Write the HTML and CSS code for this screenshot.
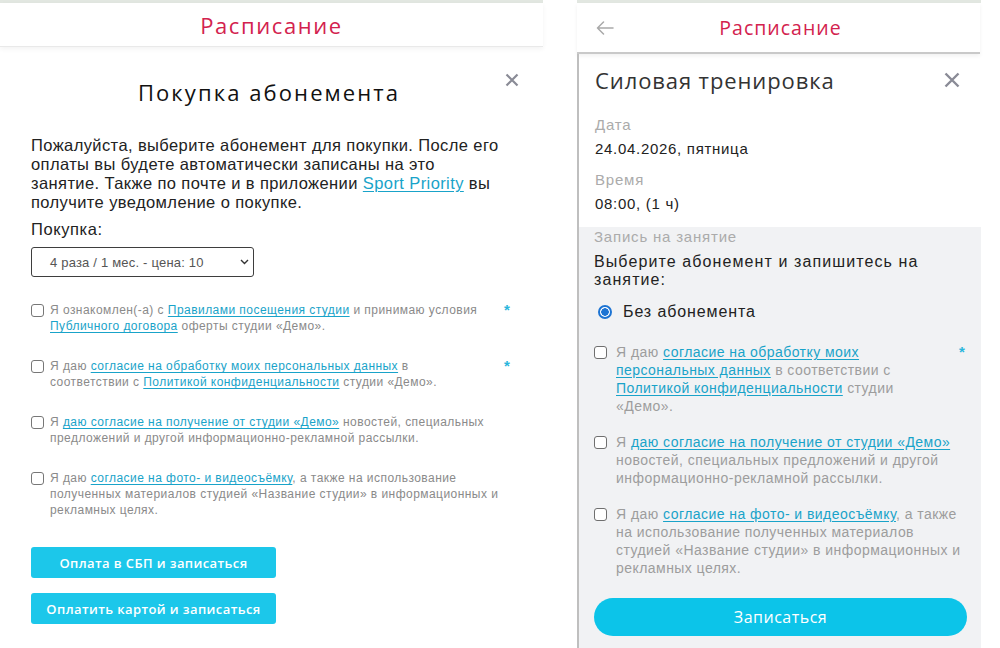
FILE: index.html
```html
<!DOCTYPE html>
<html lang="ru">
<head>
<meta charset="utf-8">
<title>Расписание</title>
<link rel="stylesheet" href="styles.css">
</head>
<body>
<div class="page">
  <section class="pane pane-left">
    <div class="topline"></div>
    <header class="bar">
      <h1 class="bar-title">Расписание</h1>
    </header>
    <div class="modal">
      <div class="modal-head">
        <span></span>
        <h2 class="modal-title">Покупка абонемента</h2>
        <span class="close close-left" aria-label="Закрыть">
          <svg width="14" height="14" viewBox="0 0 14 14"><path d="M1.5 1.5 L12.5 12.5 M12.5 1.5 L1.5 12.5" stroke="#8a8b96" stroke-width="2.2" fill="none"/></svg>
        </span>
      </div>
      <p class="intro">Пожалуйста, выберите абонемент для покупки. После его<br>оплаты вы будете автоматически записаны на это<br>занятие. Также по почте и в приложении <a class="link" href="#">Sport Priority</a> вы<br>получите уведомление о покупке.</p>
      <div class="field-label">Покупка:</div>
      <div class="select">
        <span>4 раза / 1 мес. - цена: 10</span>
        <svg width="9" height="6" viewBox="0 0 9 6"><path d="M1 1 L4.5 4.5 L8 1" stroke="#333" stroke-width="1.4" fill="none"/></svg>
      </div>
      <ul class="consents">
        <li class="consent">
          <span class="box"></span>
          <span class="consent-text">Я ознакомлен(-а) с <a class="link" href="#">Правилами посещения студии</a> и принимаю условия<br><a class="link" href="#">Публичного договора</a> оферты студии «Демо».</span>
          <span class="req">*</span>
        </li>
        <li class="consent">
          <span class="box"></span>
          <span class="consent-text">Я даю <a class="link" href="#">согласие на обработку моих персональных данных</a> в<br>соответствии с <a class="link" href="#">Политикой конфиденциальности</a> студии «Демо».</span>
          <span class="req">*</span>
        </li>
        <li class="consent">
          <span class="box"></span>
          <span class="consent-text">Я <a class="link" href="#">даю согласие на получение от студии «Демо»</a> новостей, специальных<br>предложений и другой информационно-рекламной рассылки.</span>
          <span class="req"></span>
        </li>
        <li class="consent">
          <span class="box"></span>
          <span class="consent-text">Я даю <a class="link" href="#">согласие на фото- и видеосъёмку</a>, а также на использование<br>полученных материалов студией «Название студии» в информационных и<br>рекламных целях.</span>
          <span class="req"></span>
        </li>
      </ul>
      <div class="actions">
        <button class="btn">Оплата в СБП и записаться</button>
        <button class="btn">Оплатить картой и записаться</button>
      </div>
    </div>
  </section>

  <div class="divider"></div>

  <section class="pane pane-right">
    <div class="topline"></div>
    <header class="bar bar-right">
      <span class="back" aria-label="Назад">
        <svg width="18" height="14" viewBox="0 0 18 14"><path d="M17 7 H1.5 M7.5 1 L1.5 7 L7.5 13" stroke="#a9a9a9" stroke-width="1.5" fill="none" stroke-linecap="round" stroke-linejoin="round"/></svg>
      </span>
      <h1 class="bar-title">Расписание</h1>
      <span class="back-spacer"></span>
    </header>
    <div class="card">
      <div class="card-head">
        <h2 class="card-title">Силовая тренировка</h2>
        <span class="close close-right" aria-label="Закрыть">
          <svg width="16" height="16" viewBox="0 0 16 16"><path d="M1.5 1.5 L14.5 14.5 M14.5 1.5 L1.5 14.5" stroke="#8a8b96" stroke-width="2.4" fill="none"/></svg>
        </span>
      </div>
      <dl class="info">
        <dt class="info-label">Дата</dt>
        <dd class="info-value">24.04.2026, пятница</dd>
        <dt class="info-label info-label-next">Время</dt>
        <dd class="info-value">08:00, (1 ч)</dd>
      </dl>
      <div class="signup">
        <div class="info-label">Запись на занятие</div>
        <p class="signup-lead">Выберите абонемент и запишитесь на<br>занятие:</p>
        <div class="radio-row">
          <span class="radio"></span>
          <span class="radio-text">Без абонемента</span>
        </div>
        <ul class="consents consents-right">
          <li class="consent">
            <span class="box"></span>
            <span class="consent-text">Я даю <a class="link" href="#">согласие на обработку моих</a><br><a class="link" href="#">персональных данных</a> в соответствии с<br><a class="link" href="#">Политикой конфиденциальности</a> студии<br>«Демо».</span>
            <span class="req">*</span>
          </li>
          <li class="consent">
            <span class="box"></span>
            <span class="consent-text">Я <a class="link" href="#">даю согласие на получение от студии «Демо»</a><br>новостей, специальных предложений и другой<br>информационно-рекламной рассылки.</span>
            <span class="req"></span>
          </li>
          <li class="consent">
            <span class="box"></span>
            <span class="consent-text">Я даю <a class="link" href="#">согласие на фото- и видеосъёмку</a>, а также<br>на использование полученных материалов<br>студией «Название студии» в информационных и<br>рекламных целях.</span>
            <span class="req"></span>
          </li>
        </ul>
        <button class="btn btn-round">Записаться</button>
      </div>
    </div>
  </section>
</div>
</body>
</html>
```

FILE: styles.css
```css
* { box-sizing: border-box; }
html, body { margin: 0; padding: 0; }
body {
  width: 1000px;
  height: 648px;
  overflow: hidden;
  background: #fff;
  font-family: "Liberation Sans", Arial, sans-serif;
  color: #222;
}
h1, h2, p, ul, dl, dd, dt { margin: 0; padding: 0; }
ul { list-style: none; }
button { font-family: "Open Sans", "Noto Sans", sans-serif; border: 0; cursor: pointer; }

.page {
  display: flex;
  height: 648px;
}

.pane { display: flex; flex-direction: column; }
.pane > * { flex: none; }
.pane-left { width: 543px; }
.divider { width: 34px; }
.pane-right { width: 404px; }

.topline {
  height: 3px;
  background: #e2e7e1;
}

.bar {
  height: 44px;
  display: flex;
  align-items: center;
  justify-content: center;
  border-bottom: 1px solid #e9e9e9;
  box-shadow: 0 2px 5px rgba(0, 0, 0, 0.05);
}
.bar-title {
  font-family: "Open Sans", "Noto Sans", sans-serif;
  font-size: 22px;
  font-weight: 400;
  letter-spacing: 1.6px;
  color: #d3224e;
  line-height: 30px;
}

/* left modal */
.modal {
  padding: 0 31px 0 31px;
}
.modal-head {
  margin: 26px -7px 0 -12px;
  display: grid;
  grid-template-columns: 1fr auto 1fr;
  align-items: start;
}
.modal-title {
  font-family: "Open Sans", "Noto Sans", sans-serif;
  font-size: 22px;
  font-weight: 400;
  letter-spacing: 2.1px;
  line-height: 30px;
  margin-top: 4px;
  color: #111;
}
.close { display: flex; }
.close-left { justify-self: end; }

.intro {
  margin-top: 29px;
  font-size: 16.5px;
  line-height: 19px;
  letter-spacing: 0.4px;
  white-space: nowrap;
  color: #222;
}
.link {
  color: #19a3c9;
  text-decoration: underline;
  text-underline-offset: 2px;
}
.field-label {
  margin-top: 8px;
  font-size: 16.5px;
  line-height: 19px;
  letter-spacing: 0.6px;
  color: #222;
}
.select {
  margin-top: 8px;
  width: 223px;
  height: 30px;
  border: 1px solid #3e3e3e;
  border-radius: 3px;
  display: flex;
  align-items: center;
  justify-content: space-between;
  padding: 0 4px 0 18px;
  font-size: 13px;
  letter-spacing: 0.2px;
  color: #555;
}

.consents {
  margin-top: 25px;
  display: flex;
  flex-direction: column;
  gap: 24px;
}
.consent {
  display: flex;
  align-items: flex-start;
  font-size: 12px;
  line-height: 16px;
  letter-spacing: 0.45px;
  color: #8a8a8a;
}
.box {
  flex: none;
  width: 13px;
  height: 13px;
  border: 1.5px solid #777;
  border-radius: 3px;
  margin-top: 1.5px;
  margin-right: 6px;
  background: #fff;
}
.consent-text { flex: 1; white-space: nowrap; }
.req {
  flex: none;
  width: 8px;
  color: #2bb6dc;
  font-size: 15px;
  font-weight: 700;
  line-height: 16px;
}

.actions {
  margin-top: 29px;
  display: flex;
  flex-direction: column;
  gap: 15px;
}
.btn {
  width: 245px;
  height: 31px;
  border-radius: 3px;
  background: #1cc7ea;
  color: #fff;
  font-size: 13px;
  font-weight: 600;
  letter-spacing: 0.4px;
}

/* right pane */
.bar-right {
  height: 51px;
  justify-content: space-between;
  padding: 0 0 0 19px;
  border-bottom: 2px solid #c9c9c9;
  box-shadow: 0 2px 4px rgba(0, 0, 0, 0.06);
  margin-right: 1px;
}
.bar-right .bar-title {
  font-size: 19.5px;
  letter-spacing: 1px;
  margin-left: 4px;
}
.back { display: flex; width: 18px; }
.back-spacer { width: 37px; }

.pane-right .card { flex: 1 1 auto; }
.card {
  border-left: 2px solid #bfbfbf;
  display: flex;
  flex-direction: column;
  min-height: 0;
}
.card-head {
  display: flex;
  justify-content: space-between;
  align-items: center;
  padding: 11px 21px 0 16px;
}
.card-title {
  font-family: "Open Sans", "Noto Sans", sans-serif;
  font-size: 22px;
  font-weight: 400;
  letter-spacing: 0.9px;
  line-height: 30px;
  color: #333;
}
.info {
  padding: 20px 0 13px 16px;
}
.info-label {
  font-size: 15px;
  line-height: 20px;
  color: #ababab;
  letter-spacing: 0.8px;
}
.info-value {
  margin-top: 4px;
  font-size: 15px;
  line-height: 20px;
  letter-spacing: 0.7px;
  color: #222;
}
.info-value + .info-label-next { margin-top: 11px; }

.signup {
  flex: 1;
  background: #f1f2f4;
  padding: 0 14px 0 15px;
}
.signup-lead {
  margin-top: 6px;
  font-size: 16px;
  line-height: 18px;
  letter-spacing: 1.1px;
  color: #222;
}
.radio-row {
  margin-top: 13px;
  height: 20px;
  display: flex;
  align-items: center;
  padding-left: 4px;
}
.radio {
  width: 14px;
  height: 14px;
  border-radius: 50%;
  border: 2px solid #1d74d3;
  background: radial-gradient(circle, #1d74d3 0 3.5px, #fff 4px);
  margin-right: 11px;
}
.radio-text {
  font-size: 16px;
  letter-spacing: 0.9px;
  color: #222;
}
.consents-right {
  margin-top: 21px;
  gap: 18px;
}
.consents-right .consent {
  font-size: 14px;
  line-height: 18px;
  letter-spacing: 0.45px;
  color: #9d9d9d;
}
.consents-right .box {
  margin-top: 2.5px;
  margin-right: 9px;
  border-color: #6f6f6f;
}
.consents-right .req { line-height: 18px; }

.btn-round {
  margin-top: 21px;
  width: 373px;
  height: 38px;
  border-radius: 19px;
  background: #0cc4e9;
  font-size: 16px;
  font-weight: 400;
  letter-spacing: 0.5px;
}
```
